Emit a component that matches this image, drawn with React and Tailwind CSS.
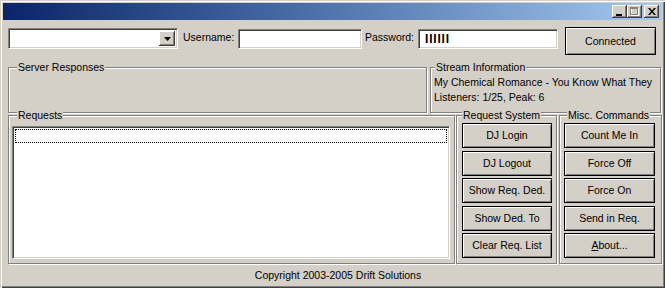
import React from "react";

const raised =
  "bg-[#d4d0c8] shadow-[inset_-1px_-1px_0_#404040,inset_1px_1px_0_#fff,inset_-2px_-2px_0_#808080]";
const sunken =
  "border border-t-[#808080] border-l-[#808080] border-r-white border-b-white shadow-[inset_1px_1px_0_#404040,inset_-1px_-1px_0_#d4d0c8]";
const etched =
  "border border-[#808080] shadow-[inset_1px_1px_0_#fff,1px_1px_0_#fff]";

function CaptionButton({ children }) {
  return (
    <div className={`w-[15px] h-[13px] flex items-center justify-center ${raised}`}>
      {children}
    </div>
  );
}

function Btn({ children }) {
  return (
    <button className="w-full h-[25px] flex items-center justify-center border border-black bg-[#d4d0c8] shadow-[inset_1px_1px_0_#fff,inset_-1px_-1px_0_#808080] text-[10.5px] leading-none text-black">
      {children}
    </button>
  );
}

function Group({ label, className, legendClass = "ml-[7px]", children }) {
  return (
    <fieldset className={`${etched} min-w-0 shrink-0 ${className}`}>
      <legend className={`${legendClass} px-[1px] bg-[#d4d0c8] text-[10.5px] leading-[12px]`}>
        {label}
      </legend>
      {children}
    </fieldset>
  );
}

export default function App() {
  return (
    <div className="w-[665px] h-[288px] bg-[#d4d0c8] p-[3px] flex flex-col font-['Liberation_Sans',Arial,sans-serif] text-[10.5px] text-black shadow-[inset_1px_1px_0_#d4d0c8,inset_2px_2px_0_#fff,inset_-1px_-1px_0_#404040,inset_-2px_-2px_0_#808080] overflow-hidden">
      {/* title bar */}
      <div className="h-[18px] flex items-center justify-end pr-[3px] bg-linear-to-r from-[#0a246a] to-[#a6caf0]">
        <CaptionButton>
          <div className="w-[6px] h-[2px] bg-black mt-[6px] -ml-[1px]" />
        </CaptionButton>
        <CaptionButton>
          <svg width="9" height="9" viewBox="0 0 9 9">
            <rect x="1.5" y="1.5" width="7" height="7" fill="none" stroke="#fff" />
            <rect x="0.5" y="0.5" width="7" height="7" fill="none" stroke="#808080" />
            <rect x="0" y="0" width="8" height="2" fill="#808080" />
          </svg>
        </CaptionButton>
        <div className="ml-[2px]">
          <CaptionButton>
            <svg width="8" height="7" viewBox="0 0 8 7">
              <path d="M0 0h2l2 2.5L6 0h2L5 3.5 8 7H6L4 4.5 2 7H0l3-3.5z" fill="#000" />
            </svg>
          </CaptionButton>
        </div>
      </div>

      <div className="pl-[5px] flex flex-col">
        {/* connection row */}
        <div className="mt-[7px] h-[28px] flex items-start">
          <div className={`mt-[1px] w-[170px] h-[21px] bg-white flex justify-end p-[2px] ${sunken}`}>
            <div className={`w-[16px] h-[15px] flex items-center justify-center ${raised}`}>
              <svg width="7" height="4" viewBox="0 0 7 4">
                <path d="M0 0h7L3.5 4z" fill="#000" />
              </svg>
            </div>
          </div>
          <span className="ml-[5px] mt-[3px] w-[55px] leading-[15px]">Username:</span>
          <div className={`mt-[2px] w-[124px] h-[20px] bg-white ${sunken}`} />
          <span className="ml-[3px] mt-[3px] w-[53px] leading-[15px]">Password:</span>
          <div className={`mt-[2px] w-[140px] h-[20px] bg-white pl-[6px] flex items-center ${sunken}`}>
            <span className="font-bold text-[12px] tracking-[0.8px] leading-none">IIIIII</span>
          </div>
          <button className="ml-[7px] w-[91px] h-[28px] pt-[1px] flex items-center justify-center border border-black bg-[#d4d0c8] shadow-[inset_1px_1px_0_#fff,inset_-1px_-1px_0_#808080] text-[10.5px]">
            Connected
          </button>
        </div>

        {/* responses / stream info */}
        <div className="mt-[6px] flex">
          <Group label="Server Responses" className="w-[419px] h-[52px]" legendClass="ml-[8px]" />
          <Group
            label="Stream Information"
            className="ml-[3px] w-[231px] h-[52px]"
            legendClass="ml-[4px]"
          >
            <div className="pl-[3px] mt-[2px] leading-[15px] whitespace-nowrap">
              <div>My Chemical Romance - You Know What They</div>
              <div>Listeners: 1/25, Peak: 6</div>
            </div>
          </Group>
        </div>

        {/* requests */}
        <div className="-mt-[4px] flex">
          <Group label="Requests" className="w-[447px] h-[155px]" legendClass="ml-[8px]">
            <div className={`ml-[3px] mt-[5px] w-[438px] h-[133px] bg-white p-[2px] ${sunken}`}>
              <div className="h-[14px] border border-dotted border-black" />
            </div>
          </Group>
          <Group label="Request System" className="ml-[1px] w-[101px] h-[155px]" legendClass="ml-[5px]">
            <div className="pl-[5px] pr-[4px] mt-[2px] flex flex-col gap-[2.5px]">
              <Btn>DJ Login</Btn>
              <Btn>DJ Logout</Btn>
              <Btn>Show Req. Ded.</Btn>
              <Btn>Show Ded. To</Btn>
              <Btn>Clear Req. List</Btn>
            </div>
          </Group>
          <Group label="Misc. Commands" className="ml-[2px] w-[103px] h-[155px]" legendClass="ml-[7px]">
            <div className="pl-[4px] pr-[6px] mt-[2px] flex flex-col gap-[2.5px]">
              <Btn>Count Me In</Btn>
              <Btn>Force Off</Btn>
              <Btn>Force On</Btn>
              <Btn>Send in Req.</Btn>
              <Btn>
                <span>
                  <span className="underline">A</span>bout...
                </span>
              </Btn>
            </div>
          </Group>
        </div>

        {/* footer */}
        <div className="h-[21px] pt-[2px] flex items-center justify-center pl-[6px]">
          Copyright 2003-2005 Drift Solutions
        </div>
      </div>
    </div>
  );
}
